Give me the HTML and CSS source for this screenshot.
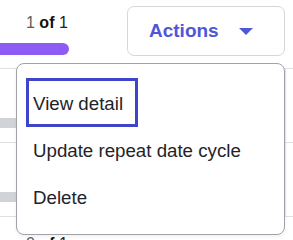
FILE: index.html
```html
<!DOCTYPE html>
<html lang="en">
<head>
<meta charset="utf-8">
<title>Actions menu</title>
<link rel="stylesheet" href="styles.css">
</head>
<body>
<div class="page">
  <div class="toolbar">
    <div class="progress">
      <div class="count"><span class="cur">1</span> <b>of</b> 1</div>
      <div class="bar"></div>
    </div>
    <button class="actions" type="button">
      <span>Actions</span>
      <svg class="caret" width="14" height="7" viewBox="0 0 14 7" aria-hidden="true"><polygon points="0,0 14,0 7,7" fill="currentColor"/></svg>
    </button>
  </div>

  <div class="table">
    <div class="row">
      <div class="cell main"><div class="skel"></div></div>
      <div class="cell side"></div>
    </div>
    <div class="row">
      <div class="cell main"><div class="skel"></div></div>
      <div class="cell side"></div>
    </div>
  </div>

  <div class="count bottom"><span class="cur">0</span> <b>of</b> 1</div>

  <div class="menu" role="menu">
    <div class="item focused" role="menuitem">View detail</div>
    <div class="item" role="menuitem">Update repeat date cycle</div>
    <div class="item" role="menuitem">Delete</div>
  </div>
</div>
</body>
</html>
```

FILE: styles.css
```css
* { box-sizing: border-box; }

html, body {
  margin: 0;
  padding: 0;
  background: #ffffff;
}

body {
  font-family: "Liberation Sans", Arial, sans-serif;
  color: #1f2328;
  overflow: hidden;
}

.page {
  position: relative;
  width: 293px;
  height: 240px;
  overflow: hidden;
}

.toolbar {
  display: flex;
  align-items: flex-start;
  height: 68px;
}

.progress {
  width: 127px;
  flex: none;
  padding-top: 14px;
}

.count {
  padding-left: 26px;
  font-size: 16px;
  line-height: 18px;
  color: #222;
  white-space: nowrap;
}

.count .cur { color: #5b5b5b; }
.count b { color: #111; font-weight: 700; }

.bar {
  margin-top: 11px;
  width: 69px;
  height: 12px;
  background: #8e5cf5;
  border-radius: 0 6px 6px 0;
}

.actions {
  margin-top: 6px;
  width: 158px;
  height: 50px;
  flex: none;
  display: flex;
  align-items: center;
  gap: 20px;
  padding: 0 0 0 21px;
  background: #fff;
  border: 1px solid #d4d7dc;
  border-radius: 7px;
  font-family: "Liberation Sans", Arial, sans-serif;
  font-size: 19px;
  font-weight: 700;
  color: #4f56d7;
  cursor: pointer;
}

.caret { display: block; flex: none; }

.table {
  border-top: 1px solid #dedfe2;
}

.row {
  display: flex;
  height: 74px;
  border-bottom: 1px solid #dedfe2;
}

.cell.main {
  width: 286px;
  flex: none;
  border-right: 1px solid #e6e7ea;
  padding-top: 49px;
}

.cell.side { flex: 1; }

.skel {
  width: 200px;
  height: 10px;
  background: #d0d3d8;
}

.count.bottom {
  margin-top: 18px;
}

.menu {
  position: absolute;
  left: 16px;
  top: 63px;
  width: 269px;
  height: 172px;
  padding: 15px 10px 14px 10px;
  background: #fff;
  border: 1px solid #9fa3a9;
  border-radius: 8px;
  box-shadow: 0 2px 4px rgba(0, 0, 0, 0.06);
}

.item {
  width: fit-content;
  height: 47px;
  padding: 3px 14px 0 6px;
  font-size: 18.7px;
  line-height: 44px;
  color: #1f2328;
  white-space: nowrap;
}

.item.focused {
  outline: 3px solid #3f45c9;
  outline-offset: -2px;
}
```
